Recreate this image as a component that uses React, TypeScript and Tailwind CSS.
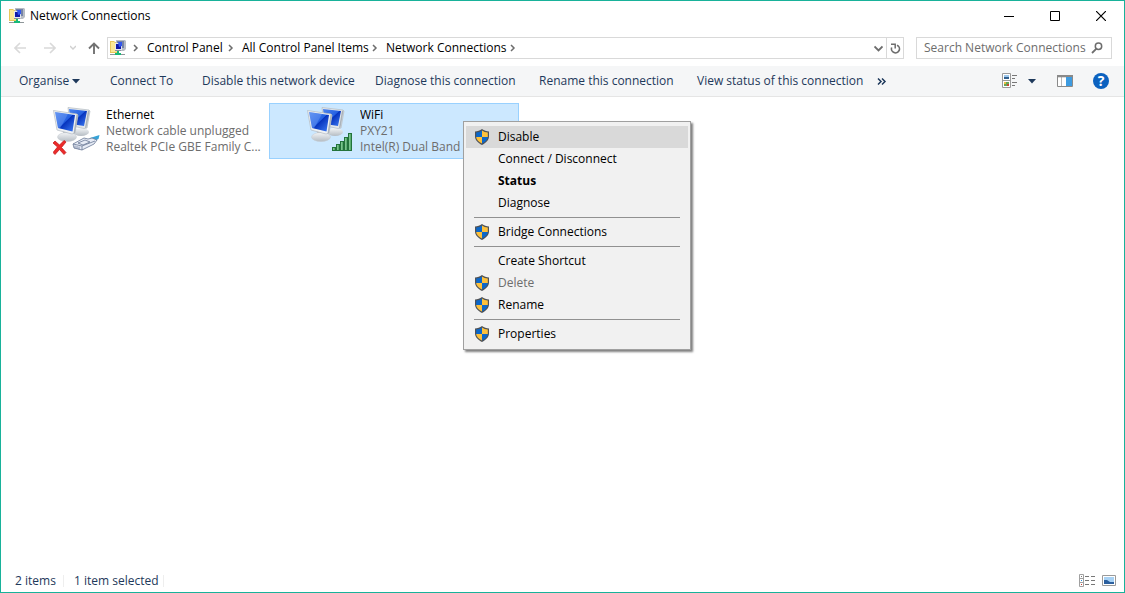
import { useState } from 'react';

interface MenuEntry {
  label: string;
  shield?: boolean;
  bold?: boolean;
  disabled?: boolean;
}

const MENU_GROUPS: MenuEntry[][] = [
  [
    { label: 'Disable', shield: true },
    { label: 'Connect / Disconnect' },
    { label: 'Status', bold: true },
    { label: 'Diagnose' },
  ],
  [{ label: 'Bridge Connections', shield: true }],
  [
    { label: 'Create Shortcut' },
    { label: 'Delete', shield: true, disabled: true },
    { label: 'Rename', shield: true },
  ],
  [{ label: 'Properties', shield: true }],
];

const CRUMBS = [
  { label: 'Control Panel', width: 'w-[76px]' },
  { label: 'All Control Panel Items', width: 'w-[125px]' },
  { label: 'Network Connections', width: 'w-[119px]' },
];

const COMMANDS = [
  { label: 'Connect To', width: 'w-[62px]' },
  { label: 'Disable this network device', width: 'w-[143px]' },
  { label: 'Diagnose this connection', width: 'w-[134px]' },
  { label: 'Rename this connection', width: 'w-[128px]' },
  { label: 'View status of this connection', width: 'w-[158px]' },
];

function NetworkIcon() {
  return (
    <svg width="16" height="16" viewBox="0 0 16 16" className="shrink-0">
      <path d="M0 1h4l1 1h3v11H0z" fill="#e8c75c" />
      <path d="M1 2h3l1 1h2v9H1z" fill="#fbe795" />
      <path d="M6 0h9l1 1v8l-2 2H6z" fill="#b7bcc4" />
      <path d="M7 1h7v7H7z" fill="#7583a6" />
      <path d="M5 3h7v7H5z" fill="#e3e6ee" />
      <path d="M6 4h5v5H6z" fill="#1018a8" />
      <path d="M8 2h4v4L9 7z" fill="#3458ee" />
      <path d="M5 10h6v1H5z" fill="#8a909c" />
      <path d="M7 11h2v2h2v2H5v-2h2z" fill="#18b978" />
      <path d="M0 14h5v1H0zM11 14h4v1h-4z" fill="#8e9699" />
    </svg>
  );
}

function ShieldIcon() {
  return (
    <svg width="16" height="16" viewBox="0 0 16 16">
      <path d="M8 0c2 1.500 4.500 2.400 7 2.500V7.500C15 11 12 14 8 16 4 14 1 11 1 7.500V2.500C3.500 2.400 6 1.500 8 0z" fill="#4f5256" />
      <path d="M8 1.500V8H2.200V3.600C4.500 3.400 6.200 2.700 8 1.500z" fill="#0c67c9" />
      <path d="M8 1.500V8h5.800V3.600C11.500 3.400 9.800 2.700 8 1.500z" fill="#fdc13c" />
      <path d="M8 8v6.600C4.700 12.900 2.400 10.700 2.200 8z" fill="#fdc13c" />
      <path d="M8 8v6.600c3.300-1.700 5.600-3.900 5.800-6.600z" fill="#0c67c9" />
    </svg>
  );
}

function AdapterIcon({ kind }: { kind: 'ethernet' | 'wifi' }) {
  const bars = [
    [25, 40, 3],
    [29, 37, 6],
    [33, 34, 9],
    [37, 30, 13],
    [41, 26, 17],
  ];
  return (
    <svg width="48" height="50" viewBox="0 0 48 50" className="shrink-0">
      <defs>
        <linearGradient id="screen" x1="0" y1="0" x2="1" y2="1">
          <stop offset="0" stopColor="#4f86ee" />
          <stop offset=".5" stopColor="#2460e2" />
          <stop offset=".52" stopColor="#0633bd" />
          <stop offset="1" stopColor="#3f7df5" />
        </linearGradient>
        <linearGradient id="base" x1="0" y1="0" x2="0" y2="1">
          <stop offset="0" stopColor="#f3f5f7" />
          <stop offset="1" stopColor="#b5bcc3" />
        </linearGradient>
        <linearGradient id="bar" x1="0" y1="0" x2="1" y2="0">
          <stop offset="0" stopColor="#9ad8a8" />
          <stop offset="1" stopColor="#3d9b57" />
        </linearGradient>
      </defs>
      <ellipse cx="28" cy="25" rx="8" ry="4" fill="url(#base)" />
      <path d="m15 .5 21 2.500 1 1-3 17-3 .5-14-3z" fill="#e4e8eb" stroke="#b3bac1" strokeWidth=".7" />
      <path d="m16 2 18 2-3 15-13-2z" fill="url(#screen)" />
      <path d="m35 3.500 1.500.5-3 16.500-1.500.5z" fill="#aab2ba" />
      <path d="M10 24h8l1 5-9-1z" fill="#b0b7be" />
      <ellipse cx="14" cy="30" rx="9.500" ry="4.500" fill="url(#base)" stroke="#c2c8ce" strokeWidth=".5" />
      <path d="M.5 3.500 24 7l1 1-3 18-3 1L4 23z" fill="#eef1f3" stroke="#b3bac1" strokeWidth=".7" />
      <path d="m2 5 20 3-2.500 16.500L5 21z" fill="url(#screen)" />
      <path d="m2 5 13 2L7 21.500 5 21z" fill="#a7c8ff" opacity=".25" />
      <path d="m23.500 7.500 1.500.5-3 18-1.500.5z" fill="#aab2ba" />
      {kind === 'ethernet' ? (
        <>
          <path
            d="m2 34 4.500 4L11 33.500l2 1.500-4.500 5.500 4.500 5-2 2-4.500-5-4.500 5-2-2 4.500-5.500L0 36z"
            fill="#ec2b2b"
            stroke="#c01414"
            strokeWidth=".7"
          />
          <path d="m37 31 9.500-3-1 4-6 3z" fill="#35a3d8" />
          <path d="m20 37 11-6 4 1 4-1 5 2-3 4-12 6-8-2z" fill="#e6ebf5" stroke="#6a7896" strokeWidth=".8" />
          <path d="m20 37 9 2 13-5M29 39v4M25 36l7-3 5 2-7 3z" fill="none" stroke="#6a7896" strokeWidth=".8" />
          <path d="M22 38.500v3m2-2.500v3m2-2.500v3" stroke="#6f7d9d" strokeWidth=".8" />
        </>
      ) : (
        bars.map(([x, y, h]) => (
          <rect key={x} x={x + 0.5} y={y + 0.5} width="3" height={h} fill="url(#bar)" stroke="#23733b" />
        ))
      )}
    </svg>
  );
}

function Chevron() {
  return (
    <svg width="6" height="8" viewBox="0 0 6 8" className="shrink-0">
      <path d="m1 1 3 3-3 3" fill="none" stroke="#6d6d6d" strokeWidth="1.500" />
    </svg>
  );
}

interface ConnectionProps {
  kind: 'ethernet' | 'wifi';
  name: string;
  status: string;
  device: string;
  selected?: boolean;
}

function Connection({ kind, name, status, device, selected }: ConnectionProps) {
  return (
    <button
      aria-pressed={!!selected}
      className={`flex h-14 w-[250px] items-start border pt-[3px] pl-[37px] text-left ${
        selected ? 'border-[#99d1ff] bg-[#cce8ff]' : 'border-transparent'
      }`}
    >
      <AdapterIcon kind={kind} />
      <span className="ml-[5px] min-w-0 flex-1 leading-4">
        <span className="block truncate text-black">{name}</span>
        <span className="block truncate text-[#6d6d6d]">{status}</span>
        <span className="block truncate text-[#6d6d6d]">{device}</span>
      </span>
    </button>
  );
}

function ContextMenu() {
  return (
    <div
      role="menu"
      className="absolute top-[18px] left-[194px] z-10 w-[228px] border border-[#a0a0a0] bg-[#f1f1f1] px-0.5 py-1 shadow-[2px_2px_2px_rgba(0,0,0,0.5)]"
    >
      {MENU_GROUPS.map((group, i) => (
        <div key={i}>
          {i > 0 && <hr className="mx-2 my-[3px] border-t border-[#919191]" />}
          {group.map(entry => (
            <button
              key={entry.label}
              role="menuitem"
              disabled={entry.disabled}
              className={`flex h-[22px] w-full items-center pl-2 text-left ${
                entry.label === 'Disable' ? 'bg-[#d9d9d9]' : ''
              } ${entry.bold ? 'font-bold' : ''} ${entry.disabled ? 'text-[#6d6d6d]' : 'text-black'}`}
            >
              <span className="mr-2 w-4">{entry.shield && <ShieldIcon />}</span>
              {entry.label}
            </button>
          ))}
        </div>
      ))}
    </div>
  );
}

function TitleBar() {
  return (
    <header className="flex h-[29px] items-center pl-2 text-black">
      <NetworkIcon />
      <h1 className="ml-[5px] flex-1">Network Connections</h1>
      <button aria-label="Minimise" className="flex h-full w-[46px] items-center justify-center">
        <svg width="10" height="10"><path d="M0 5.500h10" stroke="#000" /></svg>
      </button>
      <button aria-label="Maximise" className="flex h-full w-[46px] items-center justify-center">
        <svg width="10" height="10"><path d="M.5.5h9v9h-9z" fill="none" stroke="#000" /></svg>
      </button>
      <button aria-label="Close" className="flex h-full w-[46px] items-center justify-center">
        <svg width="10" height="10"><path d="m0 0 10 10M10 0 0 10" stroke="#000" strokeWidth="1.200" /></svg>
      </button>
    </header>
  );
}

function AddressBar() {
  const [query, setQuery] = useState('');
  return (
    <div className="flex h-9 items-center px-3">
      <button aria-label="Back" disabled className="ml-px">
        <svg width="12" height="12"><path d="M6 1 1 6l5 5M1 6h11" fill="none" stroke="#d9d9d9" strokeWidth="1.600" /></svg>
      </button>
      <button aria-label="Forward" disabled className="ml-[18px]">
        <svg width="12" height="12"><path d="m6 1 5 5-5 5M11 6H0" fill="none" stroke="#d9d9d9" strokeWidth="1.600" /></svg>
      </button>
      <button aria-label="Recent locations" disabled className="ml-[14px]">
        <svg width="6" height="6"><path d="m0 1 3 3 3-3" fill="none" stroke="#d0d0d0" strokeWidth="1.400" /></svg>
      </button>
      <button aria-label="Up" className="ml-3">
        <svg width="12" height="12"><path d="M1 6.500 6 1.500l5 5M6 2v10" fill="none" stroke="#727272" strokeWidth="1.900" /></svg>
      </button>
      <nav className="ml-[7px] flex h-[22px] min-w-0 flex-1 items-center border border-[#d9d9d9] pl-0.5 text-black">
        <NetworkIcon />
        <span className="ml-[7px] flex items-center gap-2">
          <Chevron />
          {CRUMBS.map(crumb => (
            <span key={crumb.label} className="flex items-center gap-[5px]">
              <a href="#" className={`${crumb.width} whitespace-nowrap`}>{crumb.label}</a>
              <Chevron />
            </span>
          ))}
        </span>
        <button aria-label="Previous locations" className="mr-[3px] ml-auto">
          <svg width="9" height="7"><path d="m.5 1.500 4 4 4-4" fill="none" stroke="#6d6d6d" strokeWidth="1.800" /></svg>
        </button>
        <button aria-label="Refresh" className="flex h-full w-[17px] items-center justify-center border-l border-[#d9d9d9]">
          <svg width="11" height="11" viewBox="0 0 11 11">
            <path d="M7 2.200A4 4 0 1 1 1.700 4.500" fill="none" stroke="#6d6d6d" strokeWidth="1.600" />
            <path d="M1 1.200h4.200V5.500" fill="none" stroke="#6d6d6d" strokeWidth="1.500" />
          </svg>
        </button>
      </nav>
      <div className="ml-3 flex h-[22px] w-[196px] items-center border border-[#d9d9d9] pr-2 pl-[7px]">
        <input
          type="text"
          aria-label="Search Network Connections"
          placeholder="Search Network Connections"
          value={query}
          onChange={e => setQuery(e.target.value)}
          className="w-0 flex-1 outline-none placeholder:text-[#6d6d6d]"
        />
        <svg width="12" height="12" viewBox="0 0 12 12">
          <circle cx="7.500" cy="4.300" r="3.200" fill="none" stroke="#6d6d6d" strokeWidth="1.500" />
          <path d="M5.200 6.800 1 11" stroke="#6d6d6d" strokeWidth="1.800" />
        </svg>
      </div>
    </div>
  );
}

function CommandBar() {
  return (
    <div className="flex h-[31px] items-center border-b border-[#e5e5e5] bg-[#f5f6f7] pr-[15px] pl-[18px] text-[#1e395b]">
      <button className="flex w-[61px] items-center justify-between">
        Organise
        <svg width="8" height="5"><path d="M0 0h8L4 4.500z" fill="#1e395b" /></svg>
      </button>
      <div className="ml-[30px] flex gap-[30px]">
        {COMMANDS.map(command => (
          <button key={command.label} className={`${command.width} text-left whitespace-nowrap`}>
            {command.label}
          </button>
        ))}
      </div>
      <button aria-label="More commands" className="ml-[22px]">
        <svg width="10" height="7"><path d="m1 .5 3 3-3 3m4-6 3 3-3 3" fill="none" stroke="#1e395b" strokeWidth="1.500" /></svg>
      </button>
      <button aria-label="Change your view" className="ml-auto">
        <svg width="16" height="16" viewBox="0 0 16 16">
          <path d="M.5.5h8v14h-8zM.5 7.500h8" fill="#fff" stroke="#9a9a9a" />
          <path d="M2 2h5v4H2z" fill="#9cc7ec" />
          <path d="M2 4h5v2H2z" fill="#315f8d" />
          <path d="M2 9h5v4H2z" fill="#68a657" />
          <path d="M2 9h2v2H2z" fill="#edbd42" />
          <path d="M5 11h2v2H5z" fill="#c84835" />
          <path d="M10 2.500h5M10 5.500h3M10 9.500h5M10 12.500h3" stroke="#777" />
        </svg>
      </button>
      <button aria-label="View options" className="ml-[10px]">
        <svg width="8" height="5"><path d="M0 0h8L4 4.500z" fill="#1e395b" /></svg>
      </button>
      <button aria-label="Show the preview pane" className="ml-[21px]">
        <svg width="16" height="12">
          <path d="M.5.5h15v11H.5z" fill="#fff" stroke="#8a8a8a" />
          <path d="M0 0h16v2H0zM4.500 2v10" fill="#8a8a8a" stroke="#8a8a8a" strokeWidth=".6" />
          <path d="M9 2h6v9H9z" fill="#3e9be0" />
        </svg>
      </button>
      <button
        aria-label="Get help"
        className="ml-5 flex size-4 items-center justify-center rounded-full bg-[#0c62c0] text-sm leading-4 font-bold text-white"
      >
        ?
      </button>
    </div>
  );
}

function StatusBar() {
  return (
    <footer className="flex h-[23px] items-center pr-2 pl-[14px] text-[#1e395b]">
      <span className="w-12">2 items</span>
      <span className="h-3 border-l border-[#eeeeee] pl-[10px]" />
      <span className="w-[89px]">1 item selected</span>
      <span className="h-3 border-l border-[#eeeeee]" />
      <button aria-label="Details view" className="ml-auto">
        <svg width="16" height="13">
          <path d="M.5.5h4v12h-4zM.5 4.500h4M.5 8.500h4" fill="#fff" stroke="#a0a0a0" />
          <path d="M2 2h1v1H2z" fill="#777" />
          <path d="M2 6h1v1H2z" fill="#2b8de0" />
          <path d="M2 10h1v1H2z" fill="#d03a2a" />
          <path d="M6 2.500h4m2 0h4M6 6.500h4m2 0h4M6 10.500h4m2 0h4" stroke="#777" />
        </svg>
      </button>
      <button aria-label="Large icons view" className="ml-[7px]">
        <svg width="14" height="11">
          <path d="M.5.5h13v10H.5z" fill="#fff" stroke="#9a9a9a" />
          <path d="M2 2h10v7H2z" fill="#a8d2f5" />
          <path d="M2 5h3l3 2h4v2H2z" fill="#2b5f9e" />
        </svg>
      </button>
    </footer>
  );
}

export default function App() {
  return (
    <div className="flex min-h-screen flex-col border border-[#18b29a] bg-white font-['Open_Sans','Noto_Sans',sans-serif] text-xs">
      <TitleBar />
      <AddressBar />
      <CommandBar />
      <main className="flex flex-1 flex-wrap content-start gap-1 pt-1.5 pl-[14px]">
        <Connection
          kind="ethernet"
          name="Ethernet"
          status="Network cable unplugged"
          device="Realtek PCIe GBE Family C..."
        />
        <div className="relative">
          <Connection kind="wifi" name="WiFi" status="PXY21" device="Intel(R) Dual Band Wireless-AC 3165" selected />
          <ContextMenu />
        </div>
      </main>
      <StatusBar />
    </div>
  );
}
